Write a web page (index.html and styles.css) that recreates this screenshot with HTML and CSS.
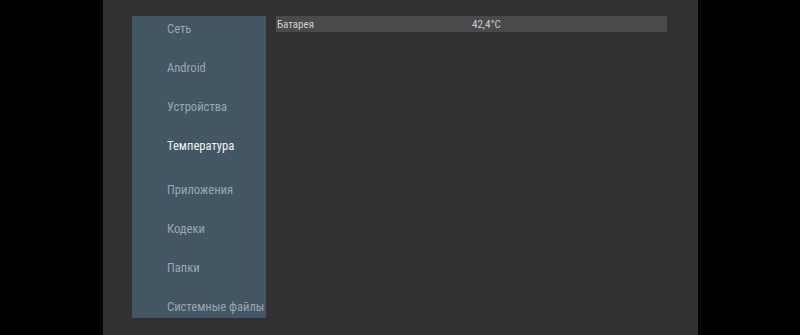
FILE: index.html
```html
<!DOCTYPE html>
<html lang="ru">
<head>
    <meta charset="UTF-8">
    <meta name="viewport" content="width=device-width, initial-scale=1.0">
    <title>Температура</title>
    <link rel="stylesheet" href="styles.css">
</head>
<body>
    <div class="screen">
        <div class="sidebar">
            <ul class="menu">
                <li>Сеть</li>
                <li>Android</li>
                <li>Устройства</li>
                <li class="selected">Температура</li>
                <li>Приложения</li>
                <li>Кодеки</li>
                <li>Папки</li>
                <li>Системные файлы</li>
            </ul>
        </div>
        <div class="content">
            <div class="row">
                <span class="name">Батарея</span>
                <span class="value">42,4°C</span>
            </div>
        </div>
    </div>
</body>
</html>
```

FILE: styles.css
```css
html, body {
    margin: 0;
    height: 100%;
    background: #000;
    font-family: "Roboto Condensed", "Liberation Sans Narrow", Roboto, sans-serif;
}

.screen {
    display: flex;
    align-items: flex-start;
    width: 595px;
    height: 335px;
    margin-left: 103px;
    background: #323032;
    box-sizing: border-box;
    padding: 16px 0 0 29px;
}

/* Боковое меню */
.sidebar {
    width: 134px;
    height: 302px;
    background: #435664;
    overflow: hidden;
}

.menu {
    list-style: none;
    margin: -7px 0 0 0;
    padding: 0 0 0 35px;
}

.menu li {
    height: 39px;
    line-height: 39px;
    font-size: 12.6px;
    color: #9aa6b1;
    white-space: nowrap;
}

.menu li.selected {
    color: #f2f2f2;
    margin-bottom: 5px;
}

/* Таблица значений */
.content {
    margin-left: 10px;
    width: 391px;
}

.row {
    display: flex;
    height: 16px;
    align-items: center;
    background: #4a494b;
    font-size: 11px;
    color: #cfcfcf;
}

.row .name {
    width: 195px;
    padding-left: 1px;
}
```
